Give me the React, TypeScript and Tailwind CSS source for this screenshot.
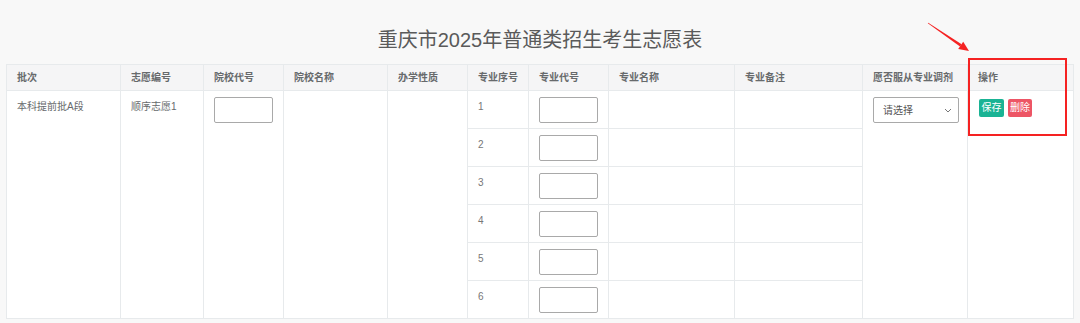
import React from "react";

const cols = [114, 83, 80, 104, 80, 61, 80, 126, 128, 105, 106];
const heads = ["批次", "志愿编号", "院校代号", "院校名称", "办学性质", "专业序号", "专业代号", "专业名称", "专业备注", "愿否服从专业调剂", "操作"];
const subRows = [1, 2, 3, 4, 5, 6];

function CodeInput() {
  return <div className="h-[26px] w-[59px] rounded-[2px] border border-[#a9a9a9] bg-white" />;
}

export default function App() {
  const cell = "border border-[#e7eaec] px-[10px] align-top";
  return (
    <div
      className="relative min-h-[323px] w-[1080px] bg-[#f8f8f8] text-[#676a6c]"
      style={{ fontFamily: '"Liberation Sans", "Noto Sans CJK SC", sans-serif' }}
    >
      <h1 className="pt-[25px] text-center text-[20px] leading-[30px] font-normal text-[#5a5a5a]">
        重庆市2025年普通类招生考生志愿表
      </h1>

      <table className="mt-[9px] ml-[6px] w-[1067px] table-fixed border-collapse bg-white text-[10px]">
        <colgroup>
          {cols.map((w, i) => (
            <col key={i} style={{ width: w }} />
          ))}
        </colgroup>
        <thead>
          <tr className="h-[26px] bg-[#f5f5f6]">
            {heads.map((h) => (
              <th key={h} className={`${cell} !align-middle text-left font-semibold text-[#676a6c]`}>
                {h}
              </th>
            ))}
          </tr>
        </thead>
        <tbody>
          {subRows.map((n) => (
            <tr key={n} className="h-[38px]">
              {n === 1 && (
                <>
                  <td rowSpan={6} className={`${cell} pt-[8px]`}>本科提前批A段</td>
                  <td rowSpan={6} className={`${cell} pt-[8px]`}>顺序志愿1</td>
                  <td rowSpan={6} className={`${cell} pt-[6px]`}>
                    <CodeInput />
                  </td>
                  <td rowSpan={6} className={cell}></td>
                  <td rowSpan={6} className={cell}></td>
                </>
              )}
              <td className={`${cell} pt-[8px] text-[#777]`}>{n}</td>
              <td className={`${cell} pt-[6px] pb-[5px]`}>
                <CodeInput />
              </td>
              <td className={cell}></td>
              <td className={cell}></td>
              {n === 1 && (
                <>
                  <td rowSpan={6} className={`${cell} pt-[6px]`}>
                    <div className="flex h-[26px] w-[86px] items-center justify-between rounded-[2px] border border-[#a9a9a9] bg-white pr-[6px] pl-[9px] text-[10px] text-[#555]">
                      <span>请选择</span>
                      <svg width="8" height="5" viewBox="0 0 8 5" fill="none">
                        <path d="M1 1l3 3 3-3" stroke="#777" strokeWidth="1" />
                      </svg>
                    </div>
                  </td>
                  <td rowSpan={6} className={`${cell} pt-[8px] pl-[11px]`}>
                    <div className="flex gap-[4px]">
                      <button className="h-[18px] w-[25px] rounded-[2px] bg-[#1ab394] text-[10px] leading-[18px] text-white">保存</button>
                      <button className="h-[18px] w-[24px] rounded-[2px] bg-[#ed5565] text-[10px] leading-[18px] text-white">删除</button>
                    </div>
                  </td>
                </>
              )}
            </tr>
          ))}
        </tbody>
      </table>

      {/* annotation overlay */}
      <div className="absolute top-[58px] left-[968px] h-[78px] w-[99px] border-2 border-[#f52222]" />
      <svg className="absolute top-[15px] left-[920px]" width="55" height="42" viewBox="0 0 55 42">
        <polygon points="7.8,8.3 8.2,7.7 41.6,29.2 40,31.6" fill="#f52222" />
        <polygon points="49,36 38.2,33.9 43.2,26.8" fill="#f52222" />
      </svg>
    </div>
  );
}
